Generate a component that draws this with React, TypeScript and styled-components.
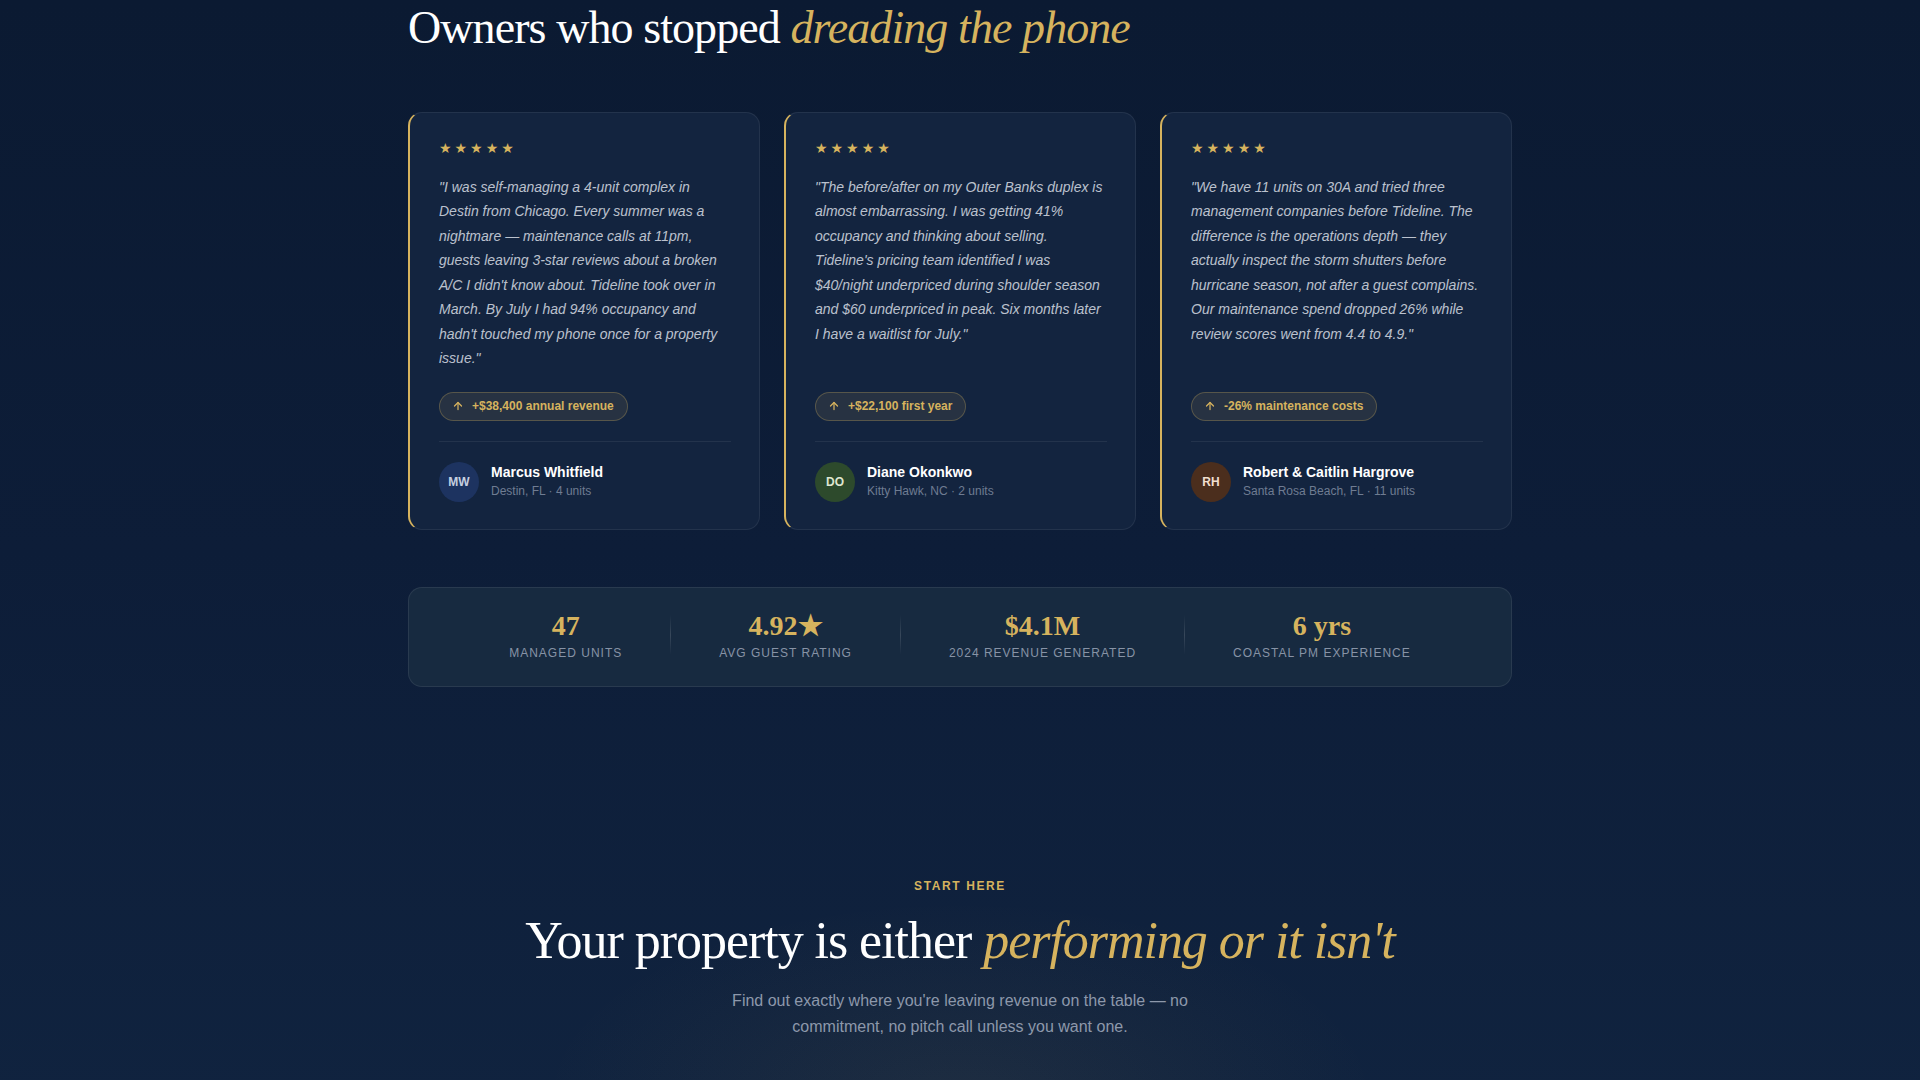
import React from "react";
import styled, { createGlobalStyle } from "styled-components";
import { ArrowUp } from "lucide-react";

const GOLD = "#d6b35e";

const Global = createGlobalStyle`
  * { box-sizing: border-box; }
  html, body { margin: 0; padding: 0; }
  body {
    background: #0c1b34;
    font-family: "Liberation Sans", Arial, sans-serif;
    color: #fff;
  }
`;

const Page = styled.div`
  min-height: 1080px;
  background: linear-gradient(180deg, #0b1a32 0%, #0d1d38 50%, #10233f 100%);
`;

const Section = styled.section`
  padding: 2px 0 96px;
`;

const Container = styled.div`
  max-width: 1104px;
  margin: 0 auto;
`;

const Heading = styled.h2<{ $size: number; $center?: boolean }>`
  margin: 0;
  font-family: "Liberation Serif", "Times New Roman", serif;
  font-weight: 400;
  font-size: ${(p) => p.$size}px;
  line-height: 1.15;
  letter-spacing: -0.02em;
  color: #ffffff;
  text-align: ${(p) => (p.$center ? "center" : "left")};
  em {
    font-style: italic;
    color: ${GOLD};
  }
`;

const Grid = styled.div`
  display: grid;
  grid-template-columns: repeat(3, 1fr);
  gap: 24px;
  margin-top: 57px;
`;

const Card = styled.article`
  display: flex;
  flex-direction: column;
  background: #13243f;
  border: 1px solid rgba(255, 255, 255, 0.07);
  border-left: 2px solid ${GOLD};
  border-radius: 14px;
  padding: 28px 28px 27px 29px;
`;

const Stars = styled.div`
  font-family: "DejaVu Sans", sans-serif;
  font-size: 14px;
  line-height: 14px;
  letter-spacing: 3px;
  color: ${GOLD};
  margin-bottom: 20px;
`;

const Quote = styled.p`
  flex: 1;
  margin: 0;
  font-style: italic;
  font-size: 14px;
  line-height: 24.5px;
  color: rgba(226, 231, 240, 0.82);
`;

const Badge = styled.div`
  align-self: flex-start;
  display: inline-flex;
  align-items: center;
  gap: 8px;
  margin-top: 21px;
  padding: 6px 13px 6px 12px;
  border-radius: 999px;
  background: rgba(214, 179, 94, 0.1);
  border: 1px solid rgba(214, 179, 94, 0.28);
  color: ${GOLD};
  font-size: 12px;
  line-height: 15px;
  font-weight: 700;
`;

const Author = styled.div`
  display: flex;
  align-items: center;
  gap: 12px;
  margin-top: 20px;
  padding-top: 20px;
  border-top: 1px solid rgba(255, 255, 255, 0.07);
`;

const Avatar = styled.div<{ $bg: string; $fg: string }>`
  width: 40px;
  height: 40px;
  border-radius: 50%;
  flex-shrink: 0;
  display: flex;
  align-items: center;
  justify-content: center;
  background: ${(p) => p.$bg};
  color: ${(p) => p.$fg};
  font-size: 12px;
  font-weight: 700;
`;

const AuthorText = styled.div`
  display: flex;
  flex-direction: column;
  gap: 3px;
`;

const Name = styled.div`
  font-size: 14px;
  font-weight: 700;
  line-height: 17px;
  color: #ffffff;
`;

const Meta = styled.div`
  font-size: 12px;
  line-height: 15px;
  color: #6f7c92;
`;

const StatsBar = styled.div`
  margin-top: 57px;
  display: flex;
  justify-content: center;
  align-items: center;
  padding: 21px 0 25px;
  background: #172a40;
  border: 1px solid rgba(255, 255, 255, 0.08);
  border-radius: 14px;
`;

const Stat = styled.div`
  display: flex;
  flex-direction: column;
  align-items: center;
  padding: 0 48px;
`;

const StatValue = styled.div`
  font-family: "Liberation Serif", "Times New Roman", serif;
  font-weight: 700;
  font-size: 28px;
  line-height: 34px;
  color: ${GOLD};
`;

const StatLabel = styled.div`
  margin-top: 2px;
  font-size: 12px;
  line-height: 16px;
  letter-spacing: 1px;
  text-transform: uppercase;
  color: #8793a6;
`;

const StatDivider = styled.div`
  width: 1px;
  height: 40px;
  background: linear-gradient(
    180deg,
    rgba(255, 255, 255, 0) 0%,
    rgba(255, 255, 255, 0.14) 50%,
    rgba(255, 255, 255, 0) 100%
  );
`;

const CtaSection = styled.section`
  padding: 95px 0 60px;
  background: radial-gradient(
    ellipse 420px 200px at 50% 100%,
    rgba(214, 179, 94, 0.07) 0%,
    rgba(214, 179, 94, 0) 100%
  );
`;

const Eyebrow = styled.div`
  text-align: center;
  font-size: 12px;
  line-height: 16px;
  font-weight: 700;
  letter-spacing: 1.6px;
  color: ${GOLD};
  margin-bottom: 17px;
`;

const Lead = styled.p`
  max-width: 470px;
  margin: 17px auto 0;
  text-align: center;
  font-size: 16px;
  line-height: 26px;
  color: #8d98ab;
`;

type Testimonial = {
  quote: string;
  badge: string;
  initials: string;
  name: string;
  meta: string;
  bg: string;
  fg: string;
};

const testimonials: Testimonial[] = [
  {
    quote:
      "\"I was self-managing a 4-unit complex in Destin from Chicago. Every summer was a nightmare — maintenance calls at 11pm, guests leaving 3-star reviews about a broken A/C I didn't know about. Tideline took over in March. By July I had 94% occupancy and hadn't touched my phone once for a property issue.\"",
    badge: "+$38,400 annual revenue",
    initials: "MW",
    name: "Marcus Whitfield",
    meta: "Destin, FL · 4 units",
    bg: "#1d3360",
    fg: "#c6cfe0",
  },
  {
    quote:
      "\"The before/after on my Outer Banks duplex is almost embarrassing. I was getting 41% occupancy and thinking about selling. Tideline's pricing team identified I was $40/night underpriced during shoulder season and $60 underpriced in peak. Six months later I have a waitlist for July.\"",
    badge: "+$22,100 first year",
    initials: "DO",
    name: "Diane Okonkwo",
    meta: "Kitty Hawk, NC · 2 units",
    bg: "#2d4a2c",
    fg: "#dfe6d0",
  },
  {
    quote:
      "\"We have 11 units on 30A and tried three management companies before Tideline. The difference is the operations depth — they actually inspect the storm shutters before hurricane season, not after a guest complains. Our maintenance spend dropped 26% while review scores went from 4.4 to 4.9.\"",
    badge: "-26% maintenance costs",
    initials: "RH",
    name: "Robert & Caitlin Hargrove",
    meta: "Santa Rosa Beach, FL · 11 units",
    bg: "#4b2e1d",
    fg: "#f1dfcf",
  },
];

const stats = [
  { value: "47", label: "Managed units" },
  { value: "4.92★", label: "Avg guest rating" },
  { value: "$4.1M", label: "2024 revenue generated" },
  { value: "6 yrs", label: "Coastal PM experience" },
];

export default function App() {
  return (
    <Page>
      <Global />
      <Section>
        <Container>
          <Heading $size={46}>
            Owners who stopped <em>dreading the phone</em>
          </Heading>
          <Grid>
            {testimonials.map((t) => (
              <Card key={t.initials}>
                <Stars>★★★★★</Stars>
                <Quote>{t.quote}</Quote>
                <Badge>
                  <ArrowUp size={12} strokeWidth={2.5} />
                  {t.badge}
                </Badge>
                <Author>
                  <Avatar $bg={t.bg} $fg={t.fg}>
                    {t.initials}
                  </Avatar>
                  <AuthorText>
                    <Name>{t.name}</Name>
                    <Meta>{t.meta}</Meta>
                  </AuthorText>
                </Author>
              </Card>
            ))}
          </Grid>
          <StatsBar>
            {stats.map((s, i) => (
              <React.Fragment key={s.label}>
                {i > 0 && <StatDivider />}
                <Stat>
                  <StatValue>{s.value}</StatValue>
                  <StatLabel>{s.label}</StatLabel>
                </Stat>
              </React.Fragment>
            ))}
          </StatsBar>
        </Container>
      </Section>
      <CtaSection>
        <Container>
          <Eyebrow>START HERE</Eyebrow>
          <Heading $size={52} $center>
            Your property is either <em>performing or it isn't</em>
          </Heading>
          <Lead>
            Find out exactly where you're leaving revenue on the table — no
            commitment, no pitch call unless you want one.
          </Lead>
        </Container>
      </CtaSection>
    </Page>
  );
}
